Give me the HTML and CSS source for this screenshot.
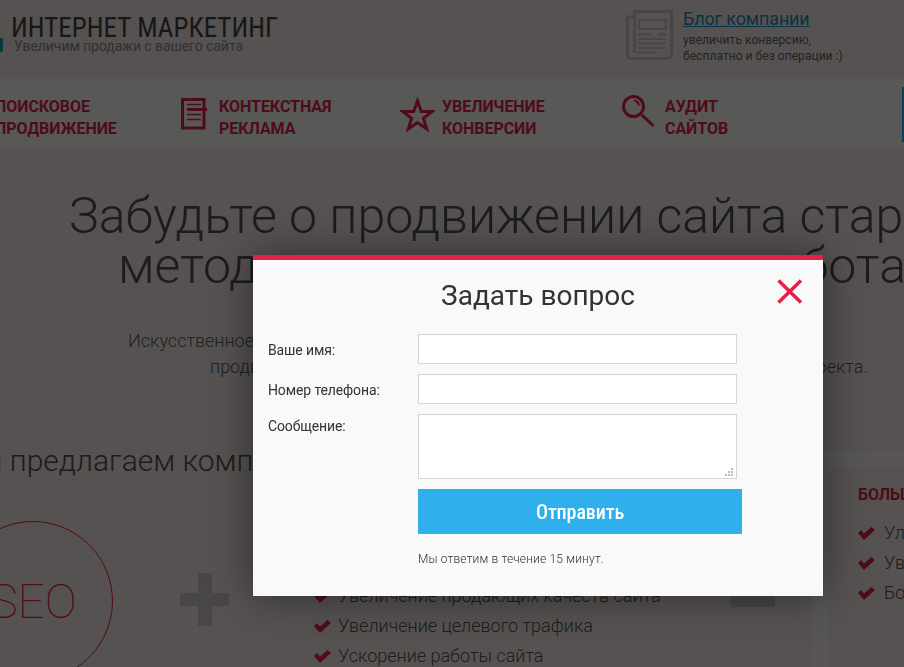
FILE: index.html
```html
<!DOCTYPE html>
<html lang="ru">
<head>
<meta charset="utf-8">
<title>Интернет маркетинг</title>
<link rel="stylesheet" href="styles.css">
</head>
<body>
<div class="page">
  <header class="top">
    <div class="logo">
      <svg class="logo-mark" width="12" height="18" viewBox="0 0 12 18"><path d="M6 0l6 3v12l-6 3-6-3V3z" fill="#1ba3b8"/></svg>
      <div>
        <div class="logo-title">ИНТЕРНЕТ МАРКЕТИНГ</div>
        <div class="logo-sub">Увеличим продажи с вашего сайта</div>
      </div>
    </div>
    <div class="blog">
      <svg class="blog-icon" width="47" height="50" viewBox="0 0 47 50" fill="none" stroke="#cdc9c6">
        <path d="M8.500 6V1.500h37V45a3.500 3.500 0 0 1-3.500 3.500H5A3.500 3.500 0 0 1 1.500 45V7h7v36" stroke-width="3"/>
        <rect x="13" y="10" width="27" height="9" stroke-width="2"/>
        <path d="M12 24.500h13M32 24.500h8M12 29h28M12 33.500h28M12 38h28M12 42.500h17" stroke-width="2"/>
      </svg>
      <div>
        <a class="blog-link" href="#">Блог компании</a>
        <div class="blog-sub">увеличить конверсию,<br>бесплатно и без операции :)</div>
      </div>
    </div>
  </header>
  <nav class="nav">
    <a class="nav-item nav-seo" href="#"><span>ПОИСКОВОЕ<br>ПРОДВИЖЕНИЕ</span></a>
    <a class="nav-item nav-ads" href="#">
      <svg width="27" height="32" viewBox="0 0 27 32" fill="none" stroke="#e0234a"><rect x="1.500" y="1.500" width="21.500" height="28.500" stroke-width="3"/><path d="M6 6.500h14M6 16.500h14M6 21.500h14" stroke-width="1.500"/><path d="M6 11.500h20" stroke-width="3"/></svg>
      <span>КОНТЕКСТНАЯ<br>РЕКЛАМА</span>
    </a>
    <a class="nav-item nav-conv" href="#">
      <svg width="35" height="35" viewBox="0 0 35 35" fill="none" stroke="#e0234a" stroke-width="3"><path d="M17.500 4l3.800 10.500h11l-8.900 6.800 3.300 10.700-9.200-6.400-9.200 6.400 3.300-10.700-8.900-6.800h11z"/></svg>
      <span>УВЕЛИЧЕНИЕ<br>КОНВЕРСИИ</span>
    </a>
    <a class="nav-item nav-audit" href="#">
      <svg class="audit-icon" width="33" height="33" viewBox="0 0 33 33" fill="none" stroke="#e0234a"><circle cx="11.500" cy="11.500" r="10" stroke-width="3"/><path d="M20 20l11.500 11" stroke-width="3"/><path d="M12 5.500a6 6 0 0 1 5 5" stroke-width="2"/></svg>
      <span>АУДИТ<br>САЙТОВ</span>
    </a>
    <div class="nav-edge"></div>
  </nav>
  <section class="hero">
    <h1 class="hero-title">Забудьте о продвижении сайта старыми<br><span class="hero-line2">методами, которые не работают</span></h1>
    <p class="hero-text">Искусственное накручивание ссылок стало причиной 90% неудач таких<br><span class="hero-text2">продвижений, поэтому важно выбрать верную стратегию для вашего проекта.</span></p>
  </section>
  <section class="offer">
    <div class="offer-main">
      <h2 class="offer-title">Мы предлагаем комплексный подход</h2>
      <div class="offer-row">
        <div class="seo-circle">SEO</div>
        <div class="plus"></div>
        <ul class="checks">
          <li>Увеличение продающих качеств сайта</li>
          <li>Увеличение целевого трафика</li>
          <li>Ускорение работы сайта</li>
        </ul>
        <div class="equals"></div>
      </div>
    </div>
    <aside class="side">
      <div class="side-card">
        <div class="side-title">БОЛЬШЕ</div>
        <ul class="checks side-checks">
          <li>Улучшение</li>
          <li>Увеличение</li>
          <li>Больше</li>
        </ul>
      </div>
    </aside>
  </section>
</div>
<div class="overlay"></div>
<div class="modal">
  <button class="close" type="button" aria-label="Закрыть">
    <svg width="26" height="25" viewBox="0 0 26 25" stroke="#e0234a" stroke-width="3.500" fill="none"><path d="M1.500 1.500l22.500 22M24 1.500L1.500 23.500"/></svg>
  </button>
  <h3 class="modal-title">Задать вопрос</h3>
  <form class="form">
    <label class="label" for="f-name">Ваше имя:</label>
    <input class="field" id="f-name" type="text">
    <label class="label" for="f-phone">Номер телефона:</label>
    <input class="field" id="f-phone" type="text">
    <label class="label label-top" for="f-msg">Сообщение:</label>
    <textarea class="field area" id="f-msg"></textarea>
    <button class="submit" type="button">Отправить</button>
    <p class="note">Мы ответим в течение 15 минут.</p>
  </form>
</div>
</body>
</html>
```
FILE: styles.css
```css
html, body { margin: 0; height: 100%; overflow: hidden; }
body { background: #f3ebe7; font-family: Roboto, "Liberation Sans", sans-serif; color: #333; }
.page { width: 904px; height: 667px; overflow: hidden; }

.top { display: flex; height: 79px; }
.logo { display: flex; width: 626px; padding-top: 14px; box-sizing: border-box; margin-left: -9px; }
.logo-mark { margin: 22px 8px 0 0; flex: none; }
.logo-title { font-family: "Roboto Condensed", "Liberation Sans Narrow", Roboto, sans-serif; font-stretch: condensed; font-size: 27px; line-height: 28px; letter-spacing: .05px; color: #444; }
.logo-sub { margin: -3px 0 0 3px; font-size: 14px; line-height: 14px; color: #8a8a8a; letter-spacing: -.07px; }
.blog { display: flex; gap: 10px; padding-top: 10px; margin-left: 9px; }
.blog-icon { flex: none; }
.blog-link { display: block; margin-top: -1px; font-size: 18px; line-height: 20px; letter-spacing: -.15px; color: #1f8fc8; }
.blog-sub { margin-top: 3px; font-size: 12.100px; line-height: 16px; color: #666; }

.nav { display: flex; position: relative; height: 70px; background: #fdfbfa; }
.nav-item { display: flex; align-items: center; gap: 11px; position: absolute; top: 0; height: 70px; font-size: 16px; font-weight: 700; line-height: 22px; letter-spacing: -.05px; color: #e0234a; text-decoration: none; }
.nav-item span { margin-top: 8px; }
.nav-seo { left: -5px; }
.nav-ads { left: 181px; }
.nav-conv { left: 400px; gap: 7px; }
.nav-audit { left: 622px; gap: 10px; }
.audit-icon { margin-top: -6px; }
.nav-edge { position: absolute; right: 0; top: 8px; width: 2px; height: 55px; background: #2fb0ec; }

.hero { white-space: nowrap; }
.hero-title { margin: 42px 0 0 69px; font-size: 50px; line-height: 50px; font-weight: 300; color: #505050; }
.hero-line2 { display: inline-block; margin-left: 49px; word-spacing: 34px; }
.hero-text { margin: 37px 0 0 128px; font-size: 18px; line-height: 26px; font-weight: 300; color: #5a6068; }
.hero-text2 { display: inline-block; margin-left: 82px; }

.offer { display: flex; position: absolute; left: 0; top: 451px; width: 904px; height: 216px; }
.offer-main { width: 842px; margin-left: -30px; flex: none; }
.offer-title { margin: -8px 0 0 -16px; font-size: 30px; line-height: 36px; font-weight: 300; color: #505050; white-space: nowrap; }
.offer-row { position: relative; }
.seo-circle { position: absolute; left: -17px; top: 42px; width: 158px; height: 158px; border: 1px solid #e0234a; border-radius: 50%; display: flex; align-items: center; justify-content: center; font-size: 48px; font-weight: 100; color: #e0234a; }
.plus { position: absolute; left: 210px; top: 94px; width: 49px; height: 53px; background:
  linear-gradient(#d0cbc6, #d0cbc6) 18px 0 / 14px 100% no-repeat,
  linear-gradient(#d0cbc6, #d0cbc6) 0 20px / 100% 13px no-repeat; }
.equals { position: absolute; left: 761px; top: 117px; width: 44px; height: 11px; background: #d0cbc6; }
.checks { margin: 0; padding: 0; list-style: none; font-size: 18px; font-weight: 300; line-height: 30px; color: #555; }
.checks li { position: relative; padding-left: 24px; white-space: nowrap; }
.checks li::before { content: ""; position: absolute; left: 0; top: 9px; width: 17px; height: 13px; background: #e0234a; clip-path: polygon(0 46%, 18% 23%, 35% 50%, 79% 0, 100% 23%, 35% 100%); }
.offer-row .checks { position: absolute; left: 344px; top: 102px; }

.side { flex: 1; background: #f9f5f2; padding: 15px 0 0 16px; }
.side-card { height: 100%; background: #f3ebe7; padding: 19px 0 0 30px; }
.side-title { font-size: 16px; font-weight: 700; line-height: 20px; color: #e0234a; }
.side-checks { margin-top: 13px; }
.side-checks li { padding-left: 26px; }

.overlay { position: fixed; inset: 0; background: rgba(0, 0, 0, .65); }

.modal { position: fixed; left: 253px; top: 255px; width: 570px; height: 341px; box-sizing: border-box; border-top: 5px solid #e0234a; background: #f9f9f9; box-shadow: 0 0 40px rgba(0, 0, 0, .45); }
.close { position: absolute; right: 20px; top: 19px; padding: 0; border: 0; background: none; line-height: 0; }
.modal-title { margin: 20px 0 0; text-align: center; font-size: 28px; line-height: 32px; font-weight: 400; color: #333; }
.form { display: grid; grid-template-columns: 150px 319px; row-gap: 10px; margin: 22px 0 0 15px; }
.label { font-size: 14px; line-height: 32px; height: 30px; letter-spacing: -.12px; color: #333; }
.label-top { line-height: 24px; }
.field { box-sizing: border-box; width: 319px; height: 30px; margin: 0; border: 1px solid #d5d5d5; background: #fff; border-radius: 0; padding: 4px; display: block; font: inherit; }
.area { height: 65px; resize: none; background:
  linear-gradient(#bbb, #bbb) right 3px bottom 2px / 2px 2px no-repeat,
  linear-gradient(#bbb, #bbb) right 6px bottom 2px / 2px 2px no-repeat,
  linear-gradient(#bbb, #bbb) right 9px bottom 2px / 2px 2px no-repeat,
  linear-gradient(#bbb, #bbb) right 3px bottom 5px / 2px 2px no-repeat,
  linear-gradient(#bbb, #bbb) right 6px bottom 5px / 2px 2px no-repeat,
  linear-gradient(#bbb, #bbb) right 3px bottom 8px / 2px 2px no-repeat,
  #fff; }
.submit { grid-column: 2; width: 324px; height: 45px; border: 0; background: #2fb0ec; color: #fff; font-family: "Roboto Condensed", "Liberation Sans Narrow", Roboto, sans-serif; font-stretch: condensed; font-size: 20px; font-weight: 500; letter-spacing: -.1px; }
.note { grid-column: 2; margin: 7px 0 0; font-size: 12px; line-height: 16px; font-weight: 300; letter-spacing: .17px; color: #333; }
```
